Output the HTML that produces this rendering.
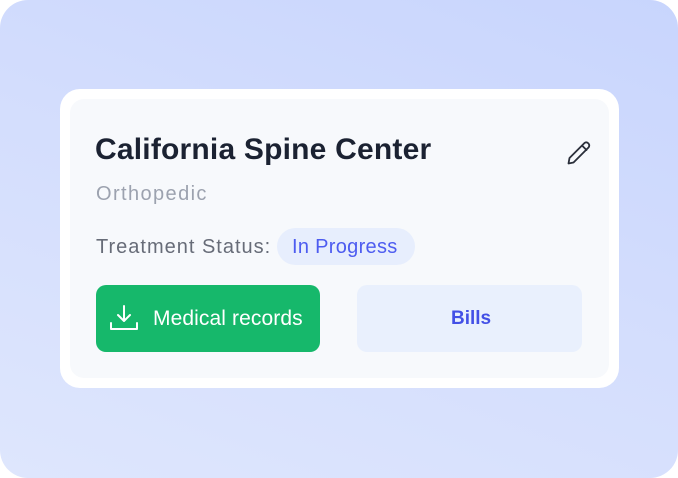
<!DOCTYPE html>
<html><head><style>
html,body{margin:0;padding:0;width:678px;height:478px;background:#fff;overflow:hidden}
*{box-sizing:border-box}
.bg{position:absolute;left:0;top:0;width:678px;height:478px;border-radius:28px;background:linear-gradient(20deg,#dee6fd 0%,#d3ddfd 55%,#c8d5fd 100%)}
.card{position:absolute;left:60px;top:89px;width:559px;height:299px;border-radius:20px;background:#fff}
.inner{position:absolute;left:70px;top:99px;width:539px;height:279px;border-radius:14px;background:#f7f9fc}
.t{position:absolute;font-family:"Liberation Sans",sans-serif;white-space:nowrap}
</style></head><body>
<div class="bg"></div>
<div class="card"></div>
<div class="inner"></div>
<div class="t" style="left:95px;top:133px;font-size:30px;font-weight:bold;color:#1b2232;letter-spacing:0.2px">California Spine Center</div>
<svg style="position:absolute;left:565px;top:139px" width="28" height="28" viewBox="0 0 28 28" fill="none" stroke="#2a2f3a" stroke-width="1.8" stroke-linejoin="round" stroke-linecap="round"><path d="M3.5 24.5 L4.5 19 L19.5 4 Q21.5 2.5 23.5 4.5 Q25 6.5 23.5 8.5 L8.5 23.5 Z M17 6.5 L21.5 11"/></svg>
<div class="t" style="left:96px;top:183px;font-size:20px;color:#9ca2af;letter-spacing:1.4px">Orthopedic</div>
<div class="t" style="left:96px;top:236px;font-size:20px;color:#676c78;letter-spacing:1px">Treatment Status:</div>
<div style="position:absolute;left:277px;top:228px;width:138px;height:37px;border-radius:19px;background:#e7eefd"></div>
<div class="t" style="left:292px;top:236px;font-size:20px;color:#4d5cf0;letter-spacing:0.3px">In Progress</div>
<div style="position:absolute;left:96px;top:285px;width:224px;height:67px;border-radius:10px;background:#16b86b"></div>
<svg style="position:absolute;left:108px;top:303px" width="32" height="30" viewBox="0 0 32 30" fill="none" stroke="#fff" stroke-width="2" stroke-linecap="round" stroke-linejoin="round"><path d="M16 3 V18 M10 12 L16 18 L22 12 M3 20 V26 H29 V20"/></svg>
<div class="t" style="left:153px;top:307px;font-size:21px;color:#fff;letter-spacing:0.1px">Medical records</div>
<div style="position:absolute;left:357px;top:285px;width:225px;height:67px;border-radius:10px;background:#e9f0fd"></div>
<div class="t" style="left:451px;top:308px;font-size:19px;font-weight:bold;color:#4350e6">Bills</div>
</body></html>
